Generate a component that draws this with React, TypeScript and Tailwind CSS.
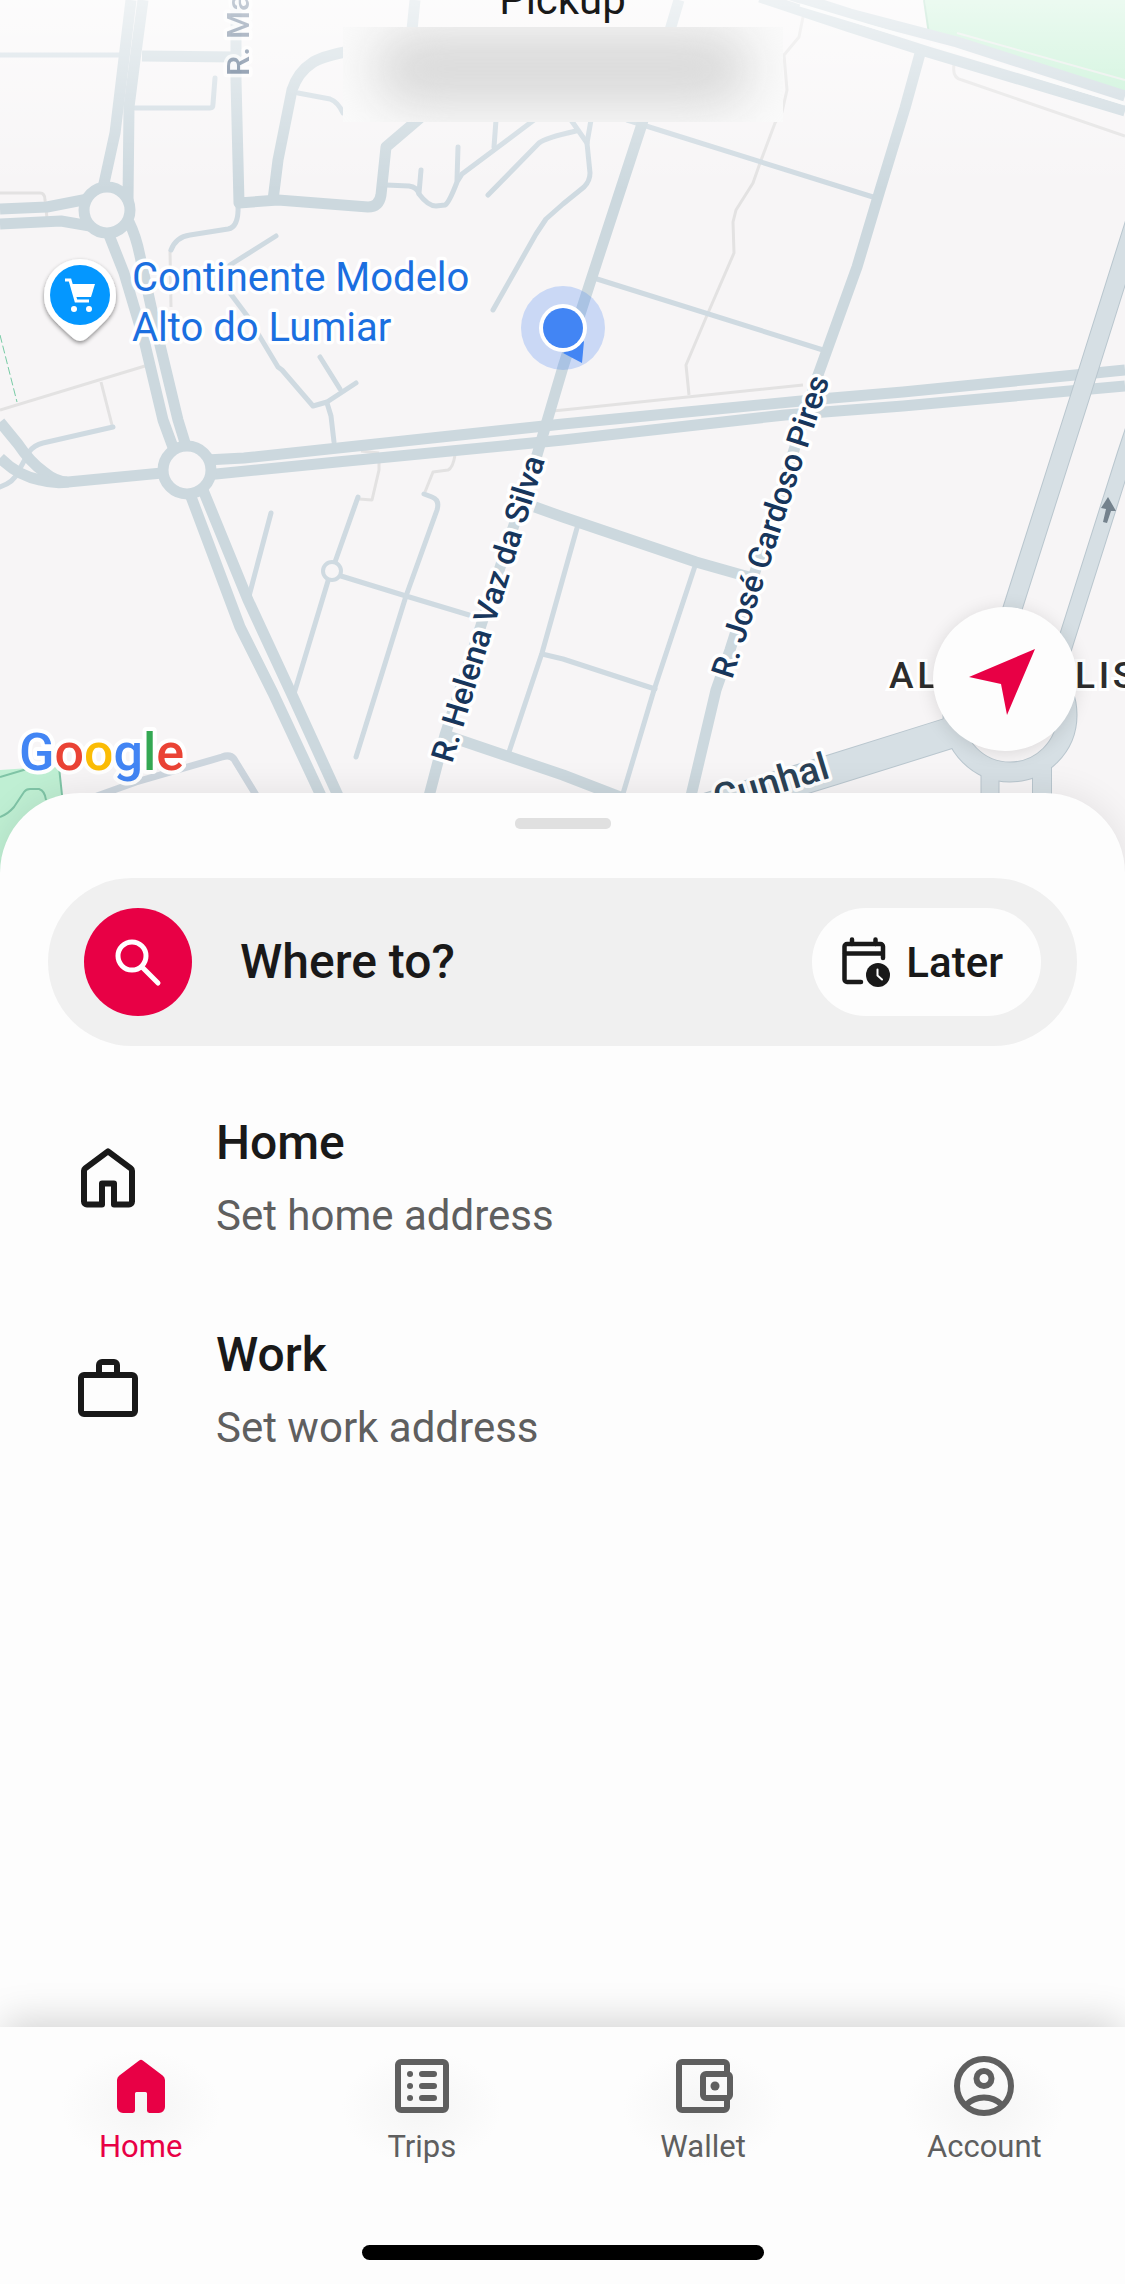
import React, { useState } from 'react';

const font = "font-['Roboto','Liberation_Sans',sans-serif]";

// dual carriageways and main streets
const mainRoads = [
  'M131 0 L125 50 L119 100 L115 133 L103 188',
  'M143 0 L135 60 L129 107 L128 200',
  'M0 209 L47 207 L88 199',
  'M0 224 L61 221 L90 226',
  'M142 56 L236 57',
  'M236 0 L236 80 L239 203 L278 200 L368 207 Q379 207 381 195 L386 147 L420 118',
  'M273 200 L278 160 L292 90 Q298 72 312 63 Q320 57 345 52',
  'M415 0 L412 30',
  'M109 235 L124 273 L144 340 L163 420 L174 450',
  'M129 222 Q136 236 140 256 L154 320 L178 420 L186 446',
  'M206 460 L244 458 L563 424 L832 398 L903 392 L1075 375 L1125 370',
  'M206 475 L337 462 L563 440 L785 415 L903 406 L1125 386',
  'M162 473 L68 482 Q56 482 44 472 Q30 462 18 444 L0 422',
  'M0 458 Q18 476 40 480 Q54 484 68 482',
  'M190 494 L240 627 L273 693 L323 800',
  'M203 490 L248 600 L293 697 L340 800',
  'M679 0 L641 127 L590 283 L563 367 L537 455 L445 735 L428 800',
  'M921 50 L905 108 L880 190 L857 267 L818 375 L730 650 L716 690 L690 800',
  'M535 507 L563 517 L696 562 L749 577',
  'M445 735 L510 757 L563 775 L620 797',
  'M760 -15 L850 14 L957 42 L1125 96',
  'M760 -3 L850 27 L928 52 L1125 111',
];

const sideRoads = [
  'M0 55 L120 55',
  'M135 108 L210 108 Q213 108 213 104 L215 78',
  'M298 93 L330 99 Q338 102 343 113',
  'M238 205 Q239 227 228 229 L190 235 Q176 237 171 250',
  'M276 236 L230 265',
  'M230 293 L248 317 L278 367 L282 370 L313 406 L327 402 L356 383',
  'M320 357 L340 389',
  'M327 403 L331 416 L334 442',
  'M386 185 L409 186 Q417 187 419 194 Q428 206 436 206 L445 205 Q449 203 457 182 L462 174 L534 120',
  'M421 170 L419 193',
  'M458 147 L457 180',
  'M496 120 L494 147',
  'M488 195 L539 143 Q545 138 576 131',
  'M571 120 L587 143 L590 173 Q590 181 584 187 L563 204 L546 219 L536 234 L493 310',
  'M591 120 L587 143',
  'M627 120 L873 197',
  'M597 279 L823 350',
  'M0 487 Q14 482 18 472 L29 452 Q34 445 43 443 L113 427',
  'M271 513 L248 600',
  'M358 497 L335 562',
  'M328 581 L293 697',
  'M341 576 L406 596 L469 615',
  'M424 494 L432 497 Q440 500 437 510 L406 596 L356 757',
  'M577 528 L563 578 L542 653 L508 755',
  'M542 654 L563 659 L655 689',
  'M696 563 L654 690 L622 797',
];

const footPaths = [
  'M0 193 L40 193 Q45 193 45 200 L47 218',
  'M170 250 L171 307',
  'M803 17 L799 37 L784 55 L787 90 L782 112 L775 123 L760 163 L753 183 L736 210 L733 222 L734 253 L708 313 L686 365 L689 395',
  'M552 411 L563 410 L803 385',
  'M954 65 Q952 78 962 80 L1125 136',
  'M0 410 L145 366',
  'M101 382 L112 425',
  'M359 499 L372 500 L379 470 L379 463',
  'M361 451 L379 453',
  'M425 492 L433 472 L448 470 Q453 468 455 455',
];

const arterials = [
  { d: 'M1142 200 L1079 400 L1005 632', w: 18 },
  { d: 'M1146 392 L1125 455 L1060 660', w: 15 },
  { d: 'M696 812 L832 770 L950 733 L975 726', w: 30 },
  { d: 'M990 765 L990 810', w: 17 },
  { d: 'M1042 765 L1042 810', w: 18 },
];

function CityMap() {
  return (
    <svg
      className="absolute inset-0 h-full w-full font-['Roboto','Liberation_Sans',sans-serif]"
      viewBox="0 0 1125 880"
      preserveAspectRatio="xMidYMin slice"
      role="img"
      aria-label="Map"
    >
      <defs>
        <linearGradient id="fade" x1="0" y1="0" x2="0" y2="1">
          <stop offset="0" stopColor="#fff" stopOpacity="0.68" />
          <stop offset="1" stopColor="#fff" stopOpacity="0" />
        </linearGradient>
        <filter id="pinShadow" x="-30%" y="-30%" width="160%" height="160%">
          <feDropShadow dx="0" dy="2" stdDeviation="2" floodOpacity="0.45" />
        </filter>
      </defs>
      <rect width="1125" height="880" fill="#f7f5f6" />

      {/* parks */}
      <path d="M925 0 L929 34 L1125 92 V0 Z" fill="#c2f0d2" />
      <path d="M924 0 L929 34" stroke="#a5d9bd" strokeWidth="2" />
      <path d="M0 770 L59 766 L62 800 V880 H0 Z" fill="#bfefd3" />
      <g fill="none" stroke="#7fc4a6" strokeWidth="2">
        <path d="M0 777 L27 769 M59 767 L62 795" />
        <path d="M0 817 Q8 814 14 807 L24 792 Q26 789 30 789 L39 789 Q45 791 46 800" />
      </g>
      <path d="M0 335 L17 402" stroke="#78cba5" strokeDasharray="8 3" />

      <g fill="none" stroke="#e3e2e2" strokeWidth="3" strokeLinejoin="round">
        {footPaths.map((d) => <path key={d} d={d} />)}
      </g>
      <g fill="none" stroke="#cfdae1" strokeWidth="5" strokeLinecap="round" strokeLinejoin="round">
        {sideRoads.map((d) => <path key={d} d={d} />)}
        <path d="M97 796 L136 782 L222 757 Q230 754 234 759 L259 800" strokeWidth="7" stroke="#cdd6de" />
        <circle cx="332" cy="571" r="9" strokeWidth="4" fill="#f7f5f6" />
      </g>
      <g fill="none" stroke="#ccd8de" strokeWidth="11" strokeLinejoin="round">
        {mainRoads.map((d) => <path key={d} d={d} />)}
        <circle cx="107" cy="210" r="23" fill="#f7f5f6" />
        <circle cx="187" cy="470" r="24" fill="#f7f5f6" />
      </g>
      <path d="M957 33 L1125 80" stroke="#e6ece8" strokeWidth="2" />
      <path d="M800 5 L920 41 M931 44 L1125 104" stroke="#f7f8f8" strokeWidth="3" />

      <g fill="none" stroke="#b9c6ce">
        {arterials.map((r) => <path key={r.d} d={r.d} strokeWidth={r.w + 2} />)}
        <circle cx="1010" cy="715" r="57" strokeWidth="21" />
      </g>
      <g fill="none" stroke="#d6dfe4">
        {arterials.map((r) => <path key={r.d} d={r.d} strokeWidth={r.w} />)}
        <circle cx="1010" cy="715" r="57" strokeWidth="19" />
      </g>
      <path d="M1108 497 L1101 508 L1106 509 L1103 522 L1107 523 L1111 511 L1116 511 Z" fill="#74828d" />

      {/* labels */}
      <g fontSize="32" fontWeight="500" fill="#17365c" stroke="#fff" strokeWidth="7" strokeLinejoin="round" paintOrder="stroke">
        <text transform="translate(249 76) rotate(-90)" opacity="0.75">R. Ma</text>
        <text transform="translate(452 764) rotate(-73)">R. Helena Vaz da Silva</text>
        <text transform="translate(732 680) rotate(-72)">R. José Cardoso Pires</text>
        <text transform="translate(718 812) rotate(-17)" fontSize="38" fill="#2b4256">Cunhal</text>
      </g>
      <g fontSize="37" fontWeight="500" className="tracking-widest" fill="#2c2c2c" stroke="#fff" strokeWidth="6" paintOrder="stroke">
        <text x="889" y="688">AL</text>
        <text x="1075" y="688">LIS</text>
      </g>
      <g fontSize="40" fill="#1b6fe0" stroke="#fff" strokeWidth="7" strokeLinejoin="round" paintOrder="stroke">
        <text x="132" y="291">Continente Modelo</text>
        <text x="132" y="341">Alto do Lumiar</text>
      </g>
      <text x="19" y="770" fontSize="52" fontWeight="500" stroke="#fff" strokeWidth="8" strokeLinejoin="round" paintOrder="stroke">
        <tspan fill="#4285f4">G</tspan>
        <tspan fill="#ea4335">o</tspan>
        <tspan fill="#fbbc05">o</tspan>
        <tspan fill="#4285f4">g</tspan>
        <tspan fill="#34a853">l</tspan>
        <tspan fill="#ea4335">e</tspan>
      </text>

      {/* shop pin */}
      <path
        d="M80 259 A36 36 0 0 1 116 295 C116 312 107 319 98 328 L87 338 Q80 344 73 338 L62 328 C53 319 44 312 44 295 A36 36 0 0 1 80 259 Z"
        fill="#fff"
        filter="url(#pinShadow)"
      />
      <circle cx="80" cy="295" r="30" fill="#0497ff" />
      <path d="M65 280 H70 L76 301 H89" fill="none" stroke="#fff" strokeWidth="3" />
      <path d="M71 284 H95 L91 297 H75 Z" fill="#fff" />
      <circle cx="74" cy="309" r="3" fill="#fff" />
      <circle cx="89" cy="309" r="3" fill="#fff" />

      {/* current position */}
      <circle cx="563" cy="328" r="42" fill="#4285f4" fillOpacity="0.25" />
      <path d="M584 341 L582 363 L563 353 Z" fill="#4285f4" />
      <circle cx="563" cy="328" r="24" fill="#fff" />
      <circle cx="563" cy="328" r="20" fill="#4285f4" />

      <rect width="1125" height="190" fill="url(#fade)" />
    </svg>
  );
}

const HomeIcon = ({ filled = false }: { filled?: boolean }) =>
  filled ? (
    <svg className="size-[72px]" viewBox="0 0 24 24" fill="currentColor" aria-hidden="true">
      <path d="M11.4 3.5a1 1 0 0 1 1.2 0l6.6 5A2 2 0 0 1 20 10v9a2 2 0 0 1-2 2h-3.2a.8.8 0 0 1-.8-.8V14.5a.5.5 0 0 0-.5-.5h-3a.5.5 0 0 0-.5.5v5.7a.8.8 0 0 1-.8.8H6a2 2 0 0 1-2-2v-9a2 2 0 0 1 .8-1.5Z" />
    </svg>
  ) : (
    <svg className="size-[72px]" viewBox="0 0 24 24" fill="none" stroke="currentColor" strokeWidth="2" strokeLinejoin="round" aria-hidden="true">
      <path d="M12 3.1 4.4 8.8a1 1 0 0 0-.4.8v10.2a1 1 0 0 0 1 1h5v-7h4v7h5a1 1 0 0 0 1-1V9.6a1 1 0 0 0-.4-.8Z" />
    </svg>
  );

const WorkIcon = () => (
  <svg className="size-[72px]" viewBox="0 0 24 24" fill="none" stroke="currentColor" strokeWidth="2" strokeLinejoin="round" aria-hidden="true">
    <rect x="3" y="7" width="18" height="13" rx="1" />
    <path d="M9 7V3.7a1 1 0 0 1 1-1h4a1 1 0 0 1 1 1V7" />
  </svg>
);

const TripsIcon = () => (
  <svg className="size-[72px]" viewBox="0 0 24 24" fill="none" stroke="currentColor" strokeWidth="2" strokeLinecap="round" aria-hidden="true">
    <rect x="4" y="4" width="16" height="16" rx="1" />
    <path d="M8 8h.01M8 12h.01M8 16h.01M12 8h4M12 12h4M12 16h4" />
  </svg>
);

const WalletIcon = () => (
  <svg className="size-[72px]" viewBox="0 0 24 24" fill="none" stroke="currentColor" strokeWidth="2" aria-hidden="true">
    <path d="M20 8V5a1 1 0 0 0-1-1H5a1 1 0 0 0-1 1v14a1 1 0 0 0 1 1h14a1 1 0 0 0 1-1v-3" />
    <rect x="12" y="8" width="9" height="8" rx="1" />
    <circle cx="16" cy="12" r="1.5" fill="currentColor" stroke="none" />
  </svg>
);

const AccountIcon = () => (
  <svg className="size-[72px]" viewBox="0 0 24 24" fill="none" stroke="currentColor" strokeWidth="2" aria-hidden="true">
    <circle cx="12" cy="12" r="9" />
    <circle cx="12" cy="9.5" r="2.5" />
    <path d="M6 18.3a8.5 8.5 0 0 1 12 0" />
  </svg>
);

const places = [
  { title: 'Home', subtitle: 'Set home address', icon: <HomeIcon /> },
  { title: 'Work', subtitle: 'Set work address', icon: <WorkIcon /> },
];

const tabs = [
  { name: 'Home', icon: <HomeIcon filled /> },
  { name: 'Trips', icon: <TripsIcon /> },
  { name: 'Wallet', icon: <WalletIcon /> },
  { name: 'Account', icon: <AccountIcon /> },
];

export default function App() {
  const [activeTab, setActiveTab] = useState('Home');

  return (
    <div className={`flex min-h-screen flex-col overflow-hidden bg-[#fdfdfd] text-[#191919] ${font}`}>
      <section className="relative h-[880px] shrink-0">
        <CityMap />
        <header className="absolute inset-x-0 top-0 flex flex-col items-center">
          <h1 className="-mt-6 text-[42px] leading-[48px]">Pickup</h1>
          <div className="mt-[3px] h-[95px] w-[440px] overflow-hidden bg-[#fafafa] px-8 py-1" aria-label="Pickup address hidden">
            <div className="h-[76px] rounded-full bg-[#dadada] blur-xl" />
          </div>
        </header>
        <button
          type="button"
          aria-label="Center on my location"
          className="absolute right-12 bottom-[129px] size-36 rounded-full bg-[#fdfdfd] shadow-[0_2px_18px_rgba(0,0,0,0.12)]"
        >
          <svg viewBox="0 0 144 144" className="size-full" aria-hidden="true">
            <path d="M102 42 L36 70 L68 77 L74 108 Z" fill="#e80045" />
          </svg>
        </button>
      </section>

      <main className="relative -mt-[87px] flex-1 rounded-t-[80px] bg-[#fdfdfd] px-12 pt-[25px] shadow-[0_0_36px_rgba(0,0,0,0.09)]">
        <div className="mx-auto h-[11px] w-24 rounded-[5px] bg-[#e0e0e0]" />

        <div className="mt-[49px] flex items-center rounded-full bg-[#f0f0f0] px-9 py-[30px]">
          <button type="button" className="flex flex-1 items-center gap-12 text-left">
            <span className="size-[108px] shrink-0 rounded-full bg-[#e80045]">
              <svg viewBox="0 0 108 108" fill="none" stroke="#fff" strokeWidth="5" strokeLinecap="round" aria-hidden="true">
                <circle cx="48" cy="48" r="14" />
                <path d="M58 59 L74 75" />
              </svg>
            </span>
            <span className="text-5xl font-medium">Where to?</span>
          </button>
          <button type="button" className="flex h-[108px] items-center gap-4 rounded-full bg-[#fdfdfd] pr-[38px] pl-[30px]">
            <svg className="h-[51px] w-12" viewBox="0 0 48 51" fill="none" stroke="currentColor" strokeWidth="4.5" strokeLinecap="round" strokeLinejoin="round" aria-hidden="true">
              <path d="M10 2.5V7M33.5 2.5V7M3 16.5H40" />
              <path d="M19 45H5a2.5 2.5 0 0 1-2.5-2.5V9.5A2.5 2.5 0 0 1 5 7H38.5A2.5 2.5 0 0 1 41 9.5V21" />
              <circle cx="36" cy="38" r="12" fill="currentColor" stroke="none" />
              <path d="M35.5 32.5V38.5L40 42.5" stroke="#fff" strokeWidth="2" />
            </svg>
            <span className="text-[42px] font-medium">Later</span>
          </button>
        </div>

        <ul className="mt-[26px]">
          {places.map((place) => (
            <li key={place.title}>
              <button type="button" className="flex w-full items-center gap-[72px] px-6 py-[43px] text-left">
                {place.icon}
                <span className="flex flex-col gap-5">
                  <span className="text-5xl leading-[56px] font-medium">{place.title}</span>
                  <span className="text-[42px] leading-[50px] text-[#5f5f5f]">{place.subtitle}</span>
                </span>
              </button>
            </li>
          ))}
        </ul>
      </main>

      <nav className="relative bg-[#fdfdfd] pt-[23px] pb-6 shadow-[0_-10px_36px_-4px_rgba(0,0,0,0.17)]">
        <div className="grid grid-cols-4 justify-items-center">
          {tabs.map((tab) => (
            <a
              key={tab.name}
              href={`#${tab.name.toLowerCase()}`}
              onClick={() => setActiveTab(tab.name)}
              aria-current={activeTab === tab.name ? 'page' : undefined}
              className={`flex w-40 flex-col items-center gap-[7px] bg-[radial-gradient(closest-side,#f5f5f5,#fdfdfd)] ${
                activeTab === tab.name ? 'text-[#e80045]' : 'text-[#5f5f5f]'
              }`}
            >
              {tab.icon}
              <span className="text-[31px] leading-9">{tab.name}</span>
            </a>
          ))}
        </div>
        <div className="mx-auto mt-20 h-[15px] w-[402px] rounded-full bg-black" />
      </nav>
    </div>
  );
}
